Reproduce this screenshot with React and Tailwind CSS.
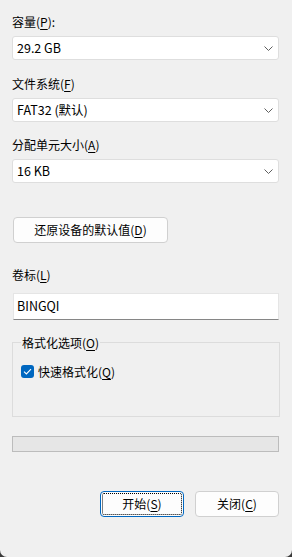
import React from "react";

const ChevronDown = () => (
  <svg width="9" height="5" viewBox="0 0 9 5" fill="none">
    <polyline points="0.5,0.5 4.5,4.5 8.5,0.5" stroke="#5f5f5f" strokeWidth="1" />
  </svg>
);

const CheckMark = () => (
  <svg width="9" height="7" viewBox="0 0 9 7" fill="none">
    <polyline points="1,3.6 3.4,6 8,1.2" stroke="white" strokeWidth="1.1" />
  </svg>
);

// label with underlined access key, e.g. 容量(P):
const Label = ({ text, hotkey, tail = "", className = "" }) => (
  <div className={`h-[17px] leading-[17px] ${className}`}>
    {text}(<u className="underline-offset-2">{hotkey}</u>){tail}
  </div>
);

const Combo = ({ value, className = "" }) => (
  <div
    className={`h-[24px] w-full flex items-center justify-between bg-white border border-[#dedede] rounded-[3px] pl-[4px] pr-[5px] ${className}`}
  >
    <span className="leading-none text-[12.5px]">{value}</span>
    <ChevronDown />
  </div>
);

export default function App() {
  return (
    <div className="w-[292px] h-[557px] bg-[#3a3a3a]">
      <div className="w-[292px] h-[557px] bg-[#f0f0f0] rounded-b-[7px] pt-[13px] pl-[12px] pr-[13px] text-[12px] text-black font-['Noto_Sans_CJK_SC',sans-serif]">
        <Label text="容量" hotkey="P" tail=":" />
        <Combo value="29.2 GB" className="mt-[6px]" />

        <Label text="文件系统" hotkey="F" className="mt-[15px]" />
        <Combo value="FAT32 (默认)" className="mt-[6px]" />

        <Label text="分配单元大小" hotkey="A" className="mt-[14px]" />
        <Combo value="16 KB" className="mt-[6px]" />

        <button className="mt-[34px] ml-[1px] h-[26px] w-[155px] bg-[#fdfdfd] border border-[#d0d0d0] rounded-[4px] flex items-center justify-center">
          还原设备的默认值(<u className="underline-offset-2">D</u>)
        </button>

        <Label text="卷标" hotkey="L" className="mt-[23px]" />
        <div className="mt-[10px] ml-[1px] h-[27px] bg-white border border-[#e5e5e5] border-b-[#868686] flex items-center pl-[3px] text-[12.5px]">
          BINGQI
        </div>

        <fieldset className="mt-[14px] w-[268px] h-[83px] border border-[#dcdcdc] px-[8px]">
          <legend className="h-[17px] leading-[17px] px-[1px]">
            格式化选项(<u className="underline-offset-2">O</u>)
          </legend>
          <div className="mt-[12px] h-[17px] flex items-center gap-[4px]">
            <span className="w-[13px] h-[13px] rounded-[3px] bg-[#0067c0] flex items-center justify-center">
              <CheckMark />
            </span>
            <span className="leading-[17px]">
              快速格式化(<u className="underline-offset-2">Q</u>)
            </span>
          </div>
        </fieldset>

        <div className="mt-[19px] h-[16px] w-full bg-[#e6e6e6] border border-[#bcbcbc]" />

        <div className="mt-[39px] flex justify-end gap-[11px]">
          <button className="h-[26px] w-[84px] bg-[#fdfdfd] border border-[#0067c0] rounded-[4px] outline-1 outline-dotted outline-black outline-offset-[-3px] flex items-center justify-center">
            开始(<u className="underline-offset-2">S</u>)
          </button>
          <button className="h-[26px] w-[84px] bg-[#fdfdfd] border border-[#d0d0d0] rounded-[4px] flex items-center justify-center">
            关闭(<u className="underline-offset-2">C</u>)
          </button>
        </div>
      </div>
    </div>
  );
}
